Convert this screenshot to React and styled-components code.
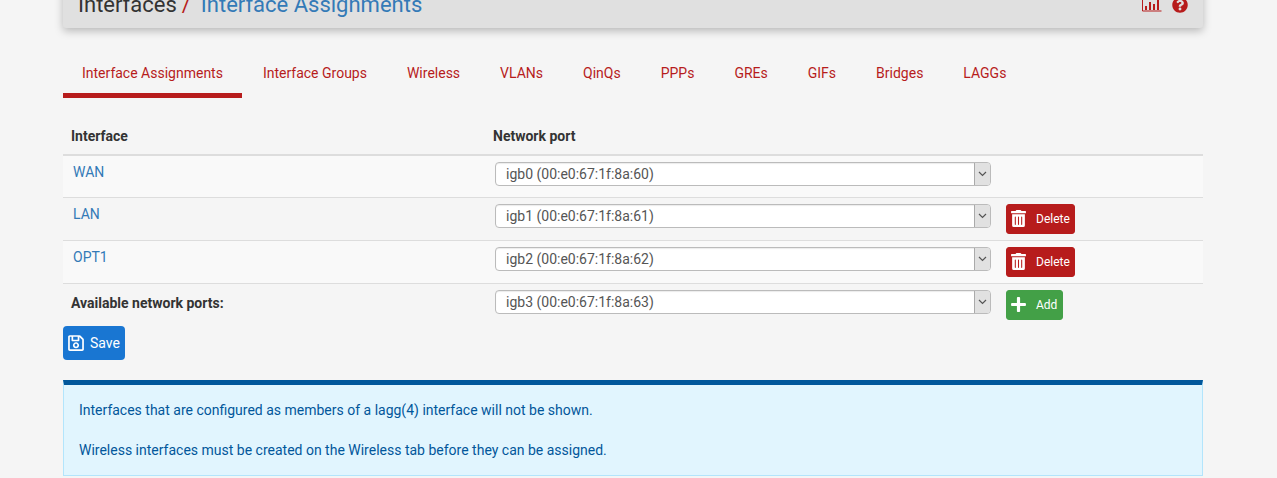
import React from "react";
import styled, { createGlobalStyle } from "styled-components";
import { FaTrashAlt, FaPlus, FaRegSave, FaQuestionCircle } from "react-icons/fa";

const GlobalStyle = createGlobalStyle`
  html, body {
    margin: 0;
    height: 478px;
    overflow: hidden;
    background: #f5f5f5;
    font-family: Roboto, "Liberation Sans", sans-serif;
    font-size: 14px;
    color: #333;
  }
  * { box-sizing: border-box; }
`;

const Container = styled.div`
  width: 1140px;
  margin: 0 0 0 63px;
`;

const PageHeader = styled.div`
  height: 58px;
  margin-top: -30px;
  padding: 23px 15px 0;
  background: #e0e0e0;
  border-radius: 3px;
  box-shadow: 0 3px 8px rgba(0, 0, 0, 0.25);
  display: flex;
  justify-content: space-between;
  align-items: flex-start;
`;

const Crumbs = styled.h1`
  margin: 0;
  font-size: 22px;
  font-weight: 400;
  line-height: 24px;
  color: #333;
`;

const Slash = styled.span`
  color: #b71c1c;
  margin: 0 10px 0 5px;
`;

const CrumbLink = styled.a`
  color: #337ab7;
`;

const HeaderIcons = styled.div`
  display: flex;
  align-items: center;
  gap: 10px;
  margin-top: 4px;
  color: #b71c1c;
  font-size: 16px;
`;

const Tabs = styled.ul`
  list-style: none;
  display: flex;
  margin: 28px 0 0;
  padding: 0;
  height: 42px;
`;

const Tab = styled.li`
  padding: 8px 19px 0 ${(p) => (p.$active ? 19 : 21)}px;
  color: #b71c1c;
  font-size: 14px;
  line-height: 18px;
  border-bottom: 5px solid ${(p) => (p.$active ? "#b71c1c" : "transparent")};
`;

const Table = styled.table`
  width: 100%;
  margin-top: 18px;
  border-collapse: collapse;
  table-layout: fixed;
`;

const HeadCell = styled.th`
  height: 39px;
  padding: 1px 8px 0;
  text-align: left;
  font-size: 14px;
  font-weight: 700;
  border-bottom: 2px solid #ddd;
`;

const Row = styled.tr`
  background: ${(p) => (p.$odd ? "#f9f9f9" : "transparent")};
  border-top: 1px solid #ddd;
  &:first-child { border-top: 0; }
`;

const Cell = styled.td`
  padding: 6px 8px 0;
  height: ${(p) => p.$h || 43}px;
  vertical-align: top;
  font-weight: ${(p) => (p.$bold ? 700 : 400)};
`;

const NameLink = styled.a`
  display: block;
  padding: 1px 0 0 2px;
  color: #337ab7;
  font-size: 14px;
  line-height: 18px;
`;

const PortLabel = styled.span`
  display: block;
  padding-top: 4px;
  line-height: 18px;
`;

const PortWrap = styled.div`
  display: flex;
  align-items: flex-start;
  gap: 15px;
  padding-left: 2px;
`;

const FakeSelect = styled.div`
  width: 496px;
  height: 24px;
  display: flex;
  background: #fff;
  border: 1px solid #bbb;
  border-radius: 4px;
  box-shadow: inset 0 1px 1px rgba(0, 0, 0, 0.08);
  overflow: hidden;
`;

const SelectValue = styled.div`
  flex: 1;
  padding-left: 10px;
  font-size: 14px;
  line-height: 23px;
  color: #555;
`;

const SelectArrow = styled.div`
  width: 16px;
  display: flex;
  align-items: center;
  justify-content: center;
  background: #e1e1e1;
  border-left: 1px solid #aaa;
`;

const ActionButton = styled.button`
  display: inline-flex;
  align-items: center;
  height: 30px;
  min-width: 57px;
  padding: 0 4px;
  border: 1px solid ${(p) => p.$color};
  border-radius: 3px;
  background: ${(p) => p.$color};
  color: #fff;
  font-family: inherit;
  font-size: 12px;
  svg { width: 15px; height: 17px; margin-right: 10px; }
`;

const SaveButton = styled.button`
  display: flex;
  align-items: center;
  width: 62px;
  height: 34px;
  padding: 0 0 0 5px;
  border: 0;
  border-radius: 4px;
  background: #1976d2;
  color: #fff;
  font-family: inherit;
  font-size: 14px;
  svg { width: 16px; height: 18px; margin-right: 6px; }
`;

const InfoBox = styled.div`
  margin-top: 20px;
  height: 96px;
  padding: 15px 15px 0;
  background: #e1f5fe;
  color: #01579b;
  font-size: 14px;
  line-height: 20px;
  border: 1px solid #b3e5fc;
  border-top: 5px solid #01579b;
`;

const InfoLine = styled.p`
  margin: 0 0 20px;
`;

const Chevron = () => (
  <svg width="9" height="6" viewBox="0 0 9 6">
    <path d="M1 1l3.5 3.5L8 1" fill="none" stroke="#555" strokeWidth="1.2" />
  </svg>
);

const ChartIcon = () => (
  <svg width="20" height="14" viewBox="0 0 20 14">
    <path d="M.5 0v13h19" fill="none" stroke="#b71c1c" strokeWidth="1" />
    <path d="M3 8h2v4H3zM7 4h2v8H7zM11 6h2v6h-2zM15 1h2v11h-2z" fill="#b71c1c" />
  </svg>
);

const tabs = ["Interface Assignments", "Interface Groups", "Wireless", "VLANs", "QinQs", "PPPs", "GREs", "GIFs", "Bridges", "LAGGs"];

const rows = [
  { name: "WAN", port: "igb0 (00:e0:67:1f:8a:60)", h: 42 },
  { name: "LAN", port: "igb1 (00:e0:67:1f:8a:61)", del: true },
  { name: "OPT1", port: "igb2 (00:e0:67:1f:8a:62)", del: true },
];

export default function App() {
  return (
    <Container>
      <GlobalStyle />
      <PageHeader>
        <Crumbs>
          Interfaces<Slash>/</Slash>
          <CrumbLink>Interface Assignments</CrumbLink>
        </Crumbs>
        <HeaderIcons>
          <ChartIcon />
          <FaQuestionCircle />
        </HeaderIcons>
      </PageHeader>

      <Tabs>
        {tabs.map((t, i) => (
          <Tab key={t} $active={i === 0}>{t}</Tab>
        ))}
      </Tabs>

      <Table>
        <colgroup>
          <col width="422" />
          <col />
        </colgroup>
        <thead>
          <tr>
            <HeadCell>Interface</HeadCell>
            <HeadCell>Network port</HeadCell>
          </tr>
        </thead>
        <tbody>
          {rows.map((r, i) => (
            <Row key={r.name} $odd={i % 2 === 0}>
              <Cell $h={r.h}><NameLink>{r.name}</NameLink></Cell>
              <Cell $h={r.h}>
                <PortWrap>
                  <FakeSelect>
                    <SelectValue>{r.port}</SelectValue>
                    <SelectArrow><Chevron /></SelectArrow>
                  </FakeSelect>
                  {r.del && (
                    <ActionButton $color="#b71c1c"><FaTrashAlt />Delete</ActionButton>
                  )}
                </PortWrap>
              </Cell>
            </Row>
          ))}
          <Row>
            <Cell $bold><PortLabel>Available network ports:</PortLabel></Cell>
            <Cell>
              <PortWrap>
                <FakeSelect>
                  <SelectValue>igb3 (00:e0:67:1f:8a:63)</SelectValue>
                  <SelectArrow><Chevron /></SelectArrow>
                </FakeSelect>
                <ActionButton $color="#43a047"><FaPlus />Add</ActionButton>
              </PortWrap>
            </Cell>
          </Row>
        </tbody>
      </Table>

      <SaveButton><FaRegSave />Save</SaveButton>

      <InfoBox>
        <InfoLine>Interfaces that are configured as members of a lagg(4) interface will not be shown.</InfoLine>
        <InfoLine>Wireless interfaces must be created on the Wireless tab before they can be assigned.</InfoLine>
      </InfoBox>
    </Container>
  );
}
